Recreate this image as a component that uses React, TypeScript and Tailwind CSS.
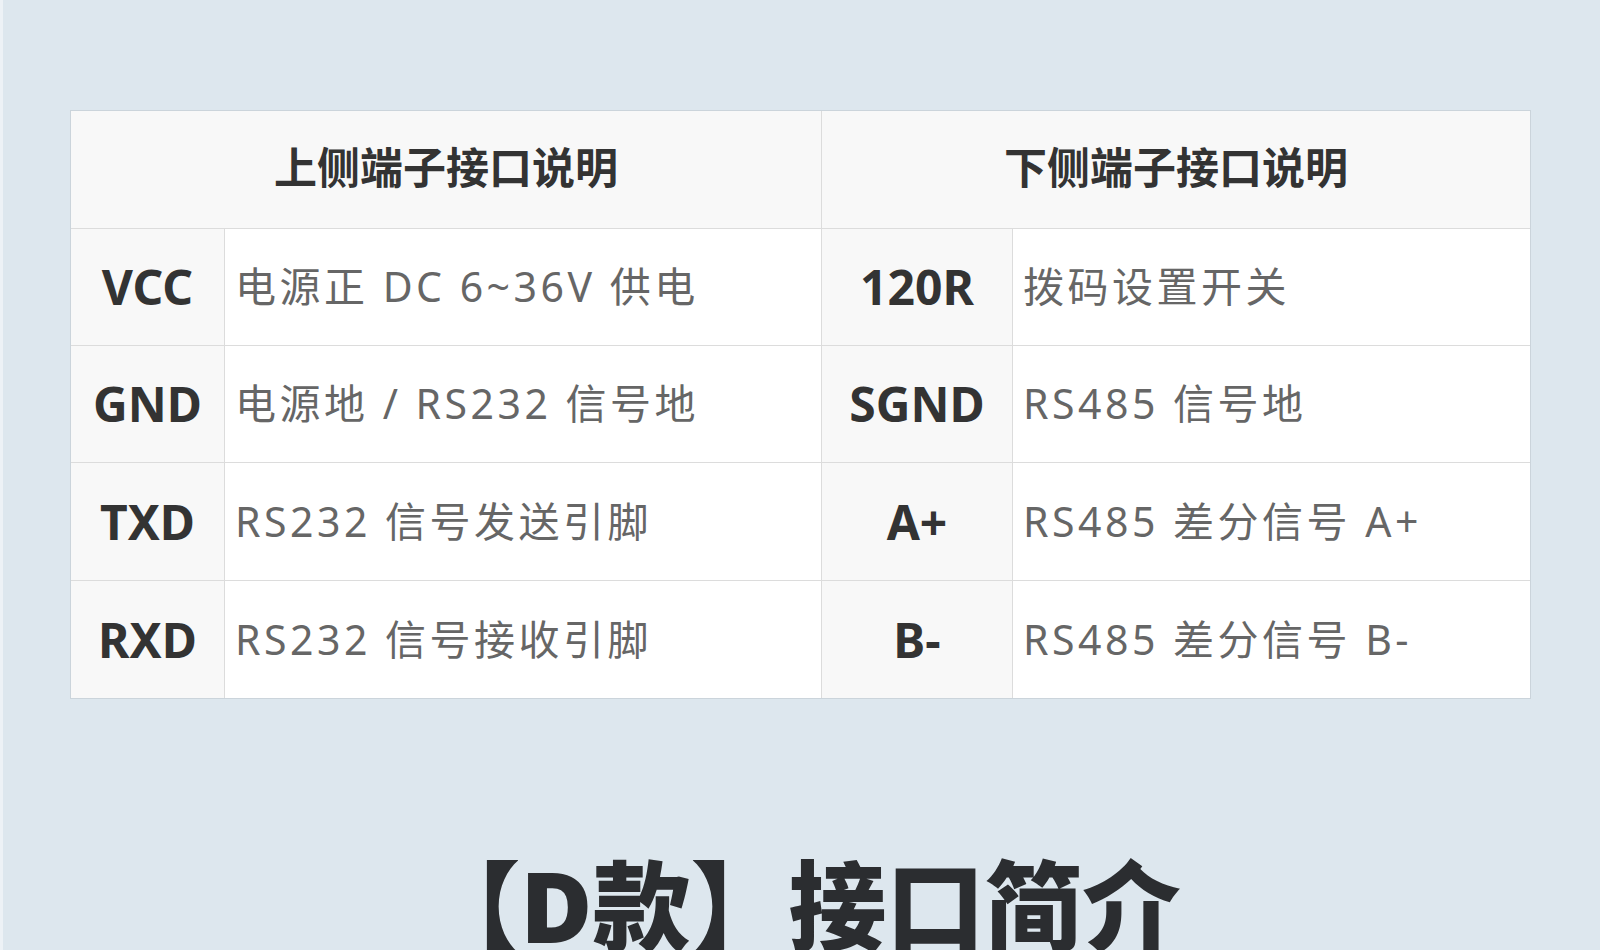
import React from "react";

const rows: [string, string, string, string][] = [
  ["VCC", "电源正 DC 6~36V 供电", "120R", "拨码设置开关"],
  ["GND", "电源地 / RS232 信号地", "SGND", "RS485 信号地"],
  ["TXD", "RS232 信号发送引脚", "A+", "RS485 差分信号 A+"],
  ["RXD", "RS232 信号接收引脚", "B-", "RS485 差分信号 B-"],
];

const heights = ["h-[116px]", "h-[116px]", "h-[117px]", "h-[117px]"];

export default function App() {
  const cjk = { fontFamily: '"Noto Sans", "Noto Sans CJK SC", sans-serif' };
  return (
    <div
      className="w-[1600px] h-[950px] overflow-hidden bg-[#dde7ee] border-l-[3px] border-[#edf2f6] flex flex-col"
      style={cjk}
    >
      <div className="mt-[110px] ml-[67px] w-[1461px] border border-[#cbd4db] bg-[#dcdcdc] grid grid-cols-[153px_596px_190px_517px] gap-px">
        <div className="col-span-2 h-[117px] bg-[#f8f8f8] flex items-center justify-center pb-[3px] text-[43px] font-bold text-[#333333]">
          上侧端子接口说明
        </div>
        <div className="col-span-2 h-[117px] bg-[#f8f8f8] flex items-center justify-center pb-[3px] text-[43px] font-bold text-[#333333]">
          下侧端子接口说明
        </div>
        {rows.map((r, i) => (
          <React.Fragment key={i}>
            <div className={`${heights[i]} bg-[#f8f8f8] flex items-center justify-center text-[48px] font-bold text-[#333333]`}>
              {r[0]}
            </div>
            <div className={`${heights[i]} bg-white flex items-center pl-[10px] text-[41px] text-[#666666] tracking-[3.5px] whitespace-nowrap`}>
              {r[1]}
            </div>
            <div className={`${heights[i]} bg-[#f8f8f8] flex items-center justify-center text-[48px] font-bold text-[#333333]`}>
              {r[2]}
            </div>
            <div className={`${heights[i]} bg-white flex items-center pl-[10px] text-[41px] text-[#666666] tracking-[3.5px] whitespace-nowrap`}>
              {r[3]}
            </div>
          </React.Fragment>
        ))}
      </div>
      <div className="mt-[157px] text-center text-[98px] leading-none font-black text-[#2b2d30] whitespace-nowrap">
        【D款】接口简介
      </div>
    </div>
  );
}
